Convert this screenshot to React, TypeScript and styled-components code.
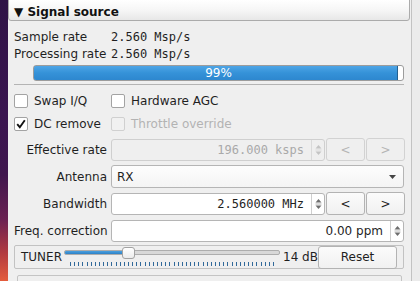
import React from "react";
import styled, { createGlobalStyle } from "styled-components";

const Global = createGlobalStyle`
  html, body { margin: 0; padding: 0; background: #efefef; }
  body { font-family: "DejaVu Sans", "Liberation Sans", sans-serif; font-size: 12px; color: #1f1f1f; }
  * { box-sizing: border-box; }
`;

const Screen = styled.div`
  display: flex;
  width: 420px;
  height: 281px;
  overflow: hidden;
`;

const Desktop = styled.div`
  width: 8px;
  flex: none;
  background: linear-gradient(180deg, #2f1346 0%, #3a1550 40%, #3f164d 62%, #6a2152 78%, #b23a40 90%, #e45c3c 100%);
`;

const Dock = styled.div`
  width: 404px;
  flex: none;
  display: flex;
  flex-direction: column;
  background: #efefef;
  border-right: 1px solid #c2c2c2;
`;

const Gutter = styled.div`
  flex: 1;
  background: #ebebeb;
`;

const Header = styled.div`
  width: 402px;
  height: 22px;
  margin-top: -1px;
  padding: 3px 0 0 5px;
  line-height: 19px;
  font-weight: bold;
  font-size: 12px;
  color: #111;
  background: linear-gradient(180deg, #ffffff 0%, #f6f6f6 50%, #e7e7e7 100%);
  border: 1px solid #ababab;
  border-radius: 0 0 3px 3px;
  white-space: pre;
`;

const Body = styled.div`
  display: flex;
  flex-direction: column;
  padding-left: 6px;
  width: 396px;
`;

const InfoGrid = styled.div`
  display: grid;
  grid-template-columns: 97px 1fr;
  grid-auto-rows: 17px;
  line-height: 17px;
  margin-top: 8px;
  white-space: nowrap;
`;

const Mono = styled.span<{ $muted?: boolean }>`
  font-family: "DejaVu Sans Mono", "Liberation Mono", monospace;
  font-size: 12px;
  color: ${(p) => (p.$muted ? "#a9a9a9" : "#1f1f1f")};
`;

const ProgressTrack = styled.div`
  display: grid;
  margin: 2px 0 0 19px;
  width: 371px;
  height: 16px;
  border: 1px solid #9c9c9c;
  border-radius: 3px;
  background: #ffffff;
  overflow: hidden;
`;

const ProgressFill = styled.div`
  grid-area: 1 / 1;
  background: linear-gradient(180deg, #4ea5e6 0%, #3592d8 50%, #2d87cf 100%);
  border: 1px solid #24608f;
  margin: -1px 0 0 -1px;
  height: 16px;
  border-radius: 3px 1px 1px 3px;
`;

const ProgressLabel = styled.div`
  grid-area: 1 / 1;
  text-align: center;
  line-height: 14px;
  color: #ffffff;
  font-size: 12px;
`;

const Separator = styled.div`
  margin-top: 3px;
  width: 390px;
  height: 1px;
  background: #b4b4b4;
`;

const CheckGrid = styled.div`
  display: grid;
  grid-template-columns: 97px 1fr;
  grid-auto-rows: 23px;
  margin-top: 4px;
`;

const CheckItem = styled.label<{ $disabled?: boolean }>`
  display: flex;
  align-items: center;
  gap: 6px;
  color: ${(p) => (p.$disabled ? "#b3b3b3" : "#1f1f1f")};
  white-space: nowrap;
`;

const CheckBox = styled.span<{ $disabled?: boolean }>`
  width: 14px;
  height: 14px;
  flex: none;
  display: flex;
  align-items: center;
  justify-content: center;
  border: 1px solid ${(p) => (p.$disabled ? "#d0d0d0" : "#a3a3a3")};
  border-radius: 2px;
  background: ${(p) => (p.$disabled ? "#f1f1f1" : "#ffffff")};
`;

const FormRows = styled.div`
  display: flex;
  flex-direction: column;
  gap: 4px;
  margin-top: 3px;
`;

const FormRow = styled.div`
  display: grid;
  grid-template-columns: 97px auto;
  align-items: center;
  height: 23px;
`;

const FormLabel = styled.span`
  text-align: right;
  padding-right: 4px;
  white-space: nowrap;
`;

const FieldLine = styled.div`
  display: flex;
  align-items: center;
  gap: 1px;
`;

const Spin = styled.div<{ $width: number; $disabled?: boolean }>`
  display: flex;
  width: ${(p) => p.$width}px;
  height: 22px;
  border: 1px solid ${(p) => (p.$disabled ? "#cfcfcf" : "#b5b5b5")};
  border-radius: 3px;
  background: ${(p) => (p.$disabled ? "#efefef" : "#ffffff")};
`;

const SpinText = styled.div<{ $muted?: boolean }>`
  flex: 1;
  text-align: right;
  padding-right: 7px;
  line-height: 20px;
  white-space: nowrap;
  color: ${(p) => (p.$muted ? "#a9a9a9" : "#1f1f1f")};
`;

const SpinArrows = styled.div<{ $disabled?: boolean }>`
  width: 13px;
  display: flex;
  align-items: center;
  justify-content: center;
  border-left: 1px solid ${(p) => (p.$disabled ? "#dadada" : "#cfcfcf")};
  color: ${(p) => (p.$disabled ? "#c4c4c4" : "#6e6e6e")};
`;

const PushButton = styled.button<{ $width: number; $disabled?: boolean }>`
  width: ${(p) => p.$width}px;
  height: 23px;
  padding: 0;
  font-family: "DejaVu Sans", "Liberation Sans", sans-serif;
  font-size: 12px;
  color: ${(p) => (p.$disabled ? "#b5b5b5" : "#1f1f1f")};
  background: ${(p) =>
    p.$disabled ? "#efefef" : "linear-gradient(180deg, #fbfbfb 0%, #f1f1f1 100%)"};
  border: 1px solid ${(p) => (p.$disabled ? "#d2d2d2" : "#b3b3b3")};
  border-radius: 3px;
`;

const Combo = styled.div`
  display: flex;
  align-items: center;
  justify-content: space-between;
  width: 293px;
  height: 23px;
  padding: 0 7px 0 5px;
  border: 1px solid #b5b5b5;
  border-radius: 3px;
  background: linear-gradient(180deg, #fdfdfd 0%, #f4f4f4 100%);
`;

const TunerBox = styled.div`
  display: flex;
  align-items: center;
  width: 390px;
  height: 24px;
  margin-top: 3px;
  padding: 0 6px;
  border: 1px solid #c2c2c2;
  border-radius: 2px;
`;

const TunerLabel = styled.span`
  margin-right: 1px;
`;

const SliderBody = styled.div`
  width: 216px;
  height: 22px;
  padding-top: 1px;
  display: flex;
  flex-direction: column;
  margin-left: 1px;
`;

const HandleTrack = styled.div`
  position: relative;
  height: 12px;
`;

const Groove = styled.div`
  margin-top: 3px;
  height: 5px;
  border: 1px solid #adadad;
  border-radius: 2px;
  background: #d8d8d8;
  overflow: hidden;
  display: flex;
`;

const GrooveFill = styled.div`
  height: 100%;
  background: linear-gradient(180deg, #4aa0e0 0%, #2f82c6 100%);
`;

const Handle = styled.div`
  position: absolute;
  top: 0;
  width: 13px;
  height: 12px;
  border: 1px solid #a2a2a2;
  border-radius: 3px;
  background: linear-gradient(180deg, #ffffff 0%, #ececec 100%);
`;

const Ticks = styled.svg`
  margin-top: 3px;
  display: block;
`;

const DbLabel = styled.span`
  margin-left: 3px;
  white-space: nowrap;
`;

const ResetWrap = styled.div`
  margin-left: auto;
`;

const BottomBox = styled.div`
  margin: 6px 0 0 3px;
  width: 385px;
  height: 20px;
  border: 1px solid #c4c4c4;
  border-radius: 2px;
`;

const Check = () => (
  <svg width="10" height="10" viewBox="0 0 10 10">
    <path d="M1.2 5.2 L3.8 8.2 L8.8 1.2" fill="none" stroke="#111" strokeWidth="1.9" />
  </svg>
);

const Arrows = () => (
  <svg width="7" height="14" viewBox="0 0 7 14">
    <path d="M0.5 5.5 L3.5 2 L6.5 5.5 Z" fill="currentColor" />
    <rect x="0.5" y="6.6" width="6" height="0.8" fill="currentColor" opacity="0.6" />
    <path d="M0.5 8.5 L3.5 12 L6.5 8.5 Z" fill="currentColor" />
  </svg>
);

const DropArrow = () => (
  <svg width="7" height="4" viewBox="0 0 7 4">
    <path d="M0 0 L7 0 L3.5 4 Z" fill="#454545" />
  </svg>
);

function TunerSlider({ value, max }: { value: number; max: number }) {
  const travel = 216 - 13;
  const left = Math.round((value / max) * travel);
  const ticks = Array.from({ length: max + 1 }, (_, i) => Math.round(6 + (i * travel) / max) + 0.5);
  return (
    <SliderBody>
      <HandleTrack>
        <Groove>
          <GrooveFill style={{ width: left + 6 }} />
        </Groove>
        <Handle style={{ left }} />
      </HandleTrack>
      <Ticks width="216" height="4" viewBox="0 0 216 4">
        {ticks.map((x, i) => (
          <line key={i} x1={x} y1="0" x2={x} y2="4" stroke="#31699a" strokeWidth="1" />
        ))}
      </Ticks>
    </SliderBody>
  );
}

export default function App() {
  return (
    <Screen>
      <Global />
      <Desktop />
      <Dock>
        <Header>▼ Signal source</Header>
        <Body>
          <InfoGrid>
            <span>Sample rate</span>
            <Mono>2.560 Msp/s</Mono>
            <span>Processing rate</span>
            <Mono>2.560 Msp/s</Mono>
          </InfoGrid>
          <ProgressTrack>
            <ProgressFill style={{ width: "99%" }} />
            <ProgressLabel>99%</ProgressLabel>
          </ProgressTrack>
          <Separator />
          <CheckGrid>
            <CheckItem>
              <CheckBox />
              Swap I/Q
            </CheckItem>
            <CheckItem>
              <CheckBox />
              Hardware AGC
            </CheckItem>
            <CheckItem>
              <CheckBox>
                <Check />
              </CheckBox>
              DC remove
            </CheckItem>
            <CheckItem $disabled>
              <CheckBox $disabled />
              Throttle override
            </CheckItem>
          </CheckGrid>
          <FormRows>
            <FormRow>
              <FormLabel>Effective rate</FormLabel>
              <FieldLine>
                <Spin $width={214} $disabled>
                  <SpinText $muted>
                    <Mono $muted>196.000 ksps</Mono>
                  </SpinText>
                  <SpinArrows $disabled>
                    <Arrows />
                  </SpinArrows>
                </Spin>
                <PushButton $width={39} $disabled>&lt;</PushButton>
                <PushButton $width={39} $disabled>&gt;</PushButton>
              </FieldLine>
            </FormRow>
            <FormRow>
              <FormLabel>Antenna</FormLabel>
              <Combo>
                <span>RX</span>
                <DropArrow />
              </Combo>
            </FormRow>
            <FormRow>
              <FormLabel>Bandwidth</FormLabel>
              <FieldLine>
                <Spin $width={214}>
                  <SpinText>
                    <Mono>2.560000 MHz</Mono>
                  </SpinText>
                  <SpinArrows>
                    <Arrows />
                  </SpinArrows>
                </Spin>
                <PushButton $width={39}>&lt;</PushButton>
                <PushButton $width={39}>&gt;</PushButton>
              </FieldLine>
            </FormRow>
            <FormRow>
              <FormLabel>Freq. correction</FormLabel>
              <Spin $width={293}>
                <SpinText>0.00 ppm</SpinText>
                <SpinArrows>
                  <Arrows />
                </SpinArrows>
              </Spin>
            </FormRow>
          </FormRows>
          <TunerBox>
            <TunerLabel>TUNER</TunerLabel>
            <TunerSlider value={14} max={49} />
            <DbLabel>14 dB</DbLabel>
            <ResetWrap>
              <PushButton $width={79}>Reset</PushButton>
            </ResetWrap>
          </TunerBox>
          <BottomBox />
        </Body>
      </Dock>
      <Gutter />
    </Screen>
  );
}
